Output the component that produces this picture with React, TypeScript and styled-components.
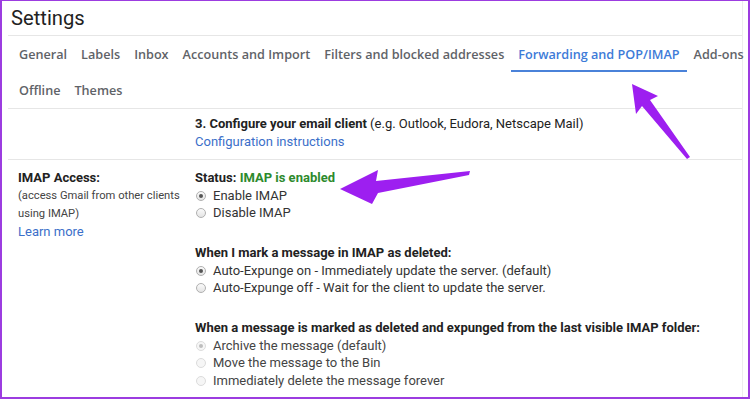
import React from "react";
import styled, { createGlobalStyle } from "styled-components";

const Global = createGlobalStyle`
  html, body { margin: 0; padding: 0; background: #fff; }
  body { font-family: Roboto, "Liberation Sans", Arial, sans-serif; }
  * { box-sizing: border-box; }
`;

const Frame = styled.div`
  position: relative;
  width: 750px;
  height: 399px;
  overflow: hidden;
  background: #fff;
  border-style: solid;
  border-color: #9c3ce0;
  border-width: 1px 2px 2px 2px;
`;

const Panel = styled.div`
  margin: 0 5px 0 6px;
  border-right: 1px solid #ededed;
  height: 100%;
`;

const Title = styled.div`
  height: 35px;
  padding: 5px 0 0 3px;
  font-family: Roboto, "Open Sans", sans-serif;
  font-size: 20.2px;
  color: #222;
  border-bottom: 1px solid #e6e6e6;
`;

const TabRow = styled.div`
  display: flex;
  height: 36px;
  padding-left: 4px;
  align-items: stretch;
`;

const TabRows = styled.div`
  border-bottom: 1px solid #e6e6e6;
`;

const Tab = styled.div<{ $active?: boolean }>`
  display: flex;
  align-items: center;
  padding: 0 7px;
  font-family: "Open Sans", Roboto, sans-serif;
  font-size: 12.65px;
  font-weight: 600;
  white-space: nowrap;
  color: ${(p) => (p.$active ? "#3d7bd8" : "#5f6368")};
  box-shadow: ${(p) => (p.$active ? "inset 0 -2px 0 #4a82d9" : "none")};
`;

const Section = styled.div<{ $last?: boolean }>`
  display: grid;
  grid-template-columns: 187px 1fr;
  padding: ${(p) => (p.$last ? "9px 0 0 0" : "6px 0 8px 0")};
  border-bottom: ${(p) => (p.$last ? "none" : "1px solid #e6e6e6")};
  font-size: 13px;
  color: #222;
`;

const LeftCol = styled.div`
  padding-left: 10px;
  line-height: 18px;
`;

const RightCol = styled.div`
  line-height: 18px;
`;

const Bold = styled.span`
  font-weight: 700;
`;

const Small = styled.div`
  font-size: 11.2px;
  color: #444;
  line-height: 18px;
`;

const Link = styled.div`
  color: #3b6fc9;
  font-size: 13px;
  line-height: 18px;
`;

const Green = styled.span`
  color: #2d8a2d;
  font-weight: 700;
`;

const Group = styled.div`
  margin-bottom: 22px;
`;

const Heading = styled.div`
  font-weight: 700;
  line-height: 18px;
`;

const RadioRow = styled.div<{ $disabled?: boolean }>`
  display: flex;
  align-items: center;
  gap: 7px;
  height: 17.5px;
  padding-left: 1px;
  color: ${(p) => (p.$disabled ? "#444" : "#333")};
`;

const Radio = styled.span<{ $checked?: boolean; $disabled?: boolean }>`
  position: relative;
  width: 10px;
  height: 10px;
  border-radius: 50%;
  border: 1px solid ${(p) => (p.$disabled ? "#dcdcdc" : "#b0b0b0")};
  background: ${(p) => (p.$disabled ? "#f6f6f6" : "linear-gradient(#fafafa, #e4e4e4)")};
  flex: none;
  &::after {
    content: "";
    display: ${(p) => (p.$checked ? "block" : "none")};
    position: absolute;
    left: 2px;
    top: 2px;
    width: 4px;
    height: 4px;
    border-radius: 50%;
    background: ${(p) => (p.$disabled ? "#bdbdbd" : "#555")};
  }
`;

const Overlay = styled.svg`
  position: absolute;
  left: -2px;
  top: -1px;
  width: 750px;
  height: 399px;
  pointer-events: none;
`;

const tabs1 = [
  "General",
  "Labels",
  "Inbox",
  "Accounts and Import",
  "Filters and blocked addresses",
  "Forwarding and POP/IMAP",
  "Add-ons",
];

function RadioItem({
  label,
  checked,
  disabled,
}: {
  label: string;
  checked?: boolean;
  disabled?: boolean;
}) {
  return (
    <RadioRow $disabled={disabled}>
      <Radio $checked={checked} $disabled={disabled} />
      <span>{label}</span>
    </RadioRow>
  );
}

export default function App() {
  return (
    <>
      <Global />
      <Frame>
        <Panel>
          <Title>Settings</Title>
          <TabRows>
            <TabRow>
              {tabs1.map((t) => (
                <Tab key={t} $active={t === "Forwarding and POP/IMAP"}>
                  {t}
                </Tab>
              ))}
            </TabRow>
            <TabRow>
              <Tab>Offline</Tab>
              <Tab>Themes</Tab>
            </TabRow>
          </TabRows>
          <Section>
            <LeftCol />
            <RightCol>
              <div>
                <Bold>3. Configure your email client</Bold> (e.g. Outlook, Eudora, Netscape Mail)
              </div>
              <Link>Configuration instructions</Link>
            </RightCol>
          </Section>
          <Section $last>
            <LeftCol>
              <Heading>IMAP Access:</Heading>
              <Small>(access Gmail from other clients</Small>
              <Small>using IMAP)</Small>
              <Link>Learn more</Link>
            </LeftCol>
            <RightCol>
              <Group>
                <Heading>
                  Status: <Green>IMAP is enabled</Green>
                </Heading>
                <RadioItem label="Enable IMAP" checked />
                <RadioItem label="Disable IMAP" />
              </Group>
              <Group>
                <Heading>When I mark a message in IMAP as deleted:</Heading>
                <RadioItem label="Auto-Expunge on - Immediately update the server. (default)" checked />
                <RadioItem label="Auto-Expunge off - Wait for the client to update the server." />
              </Group>
              <Group>
                <Heading>
                  When a message is marked as deleted and expunged from the last visible IMAP folder:
                </Heading>
                <RadioItem label="Archive the message (default)" checked disabled />
                <RadioItem label="Move the message to the Bin" disabled />
                <RadioItem label="Immediately delete the message forever" disabled />
              </Group>
            </RightCol>
          </Section>
        </Panel>
        <Overlay viewBox="0 0 750 399">
          <polygon
            fill="#9d1ff0"
            points="632,84 658,96 650,100 690,157 687,159 642,106 636,114"
          />
          <polygon
            fill="#9d1ff0"
            points="340,189 378,170 376,181 470,171 469,175 378,193 372,204"
          />
        </Overlay>
      </Frame>
    </>
  );
}
